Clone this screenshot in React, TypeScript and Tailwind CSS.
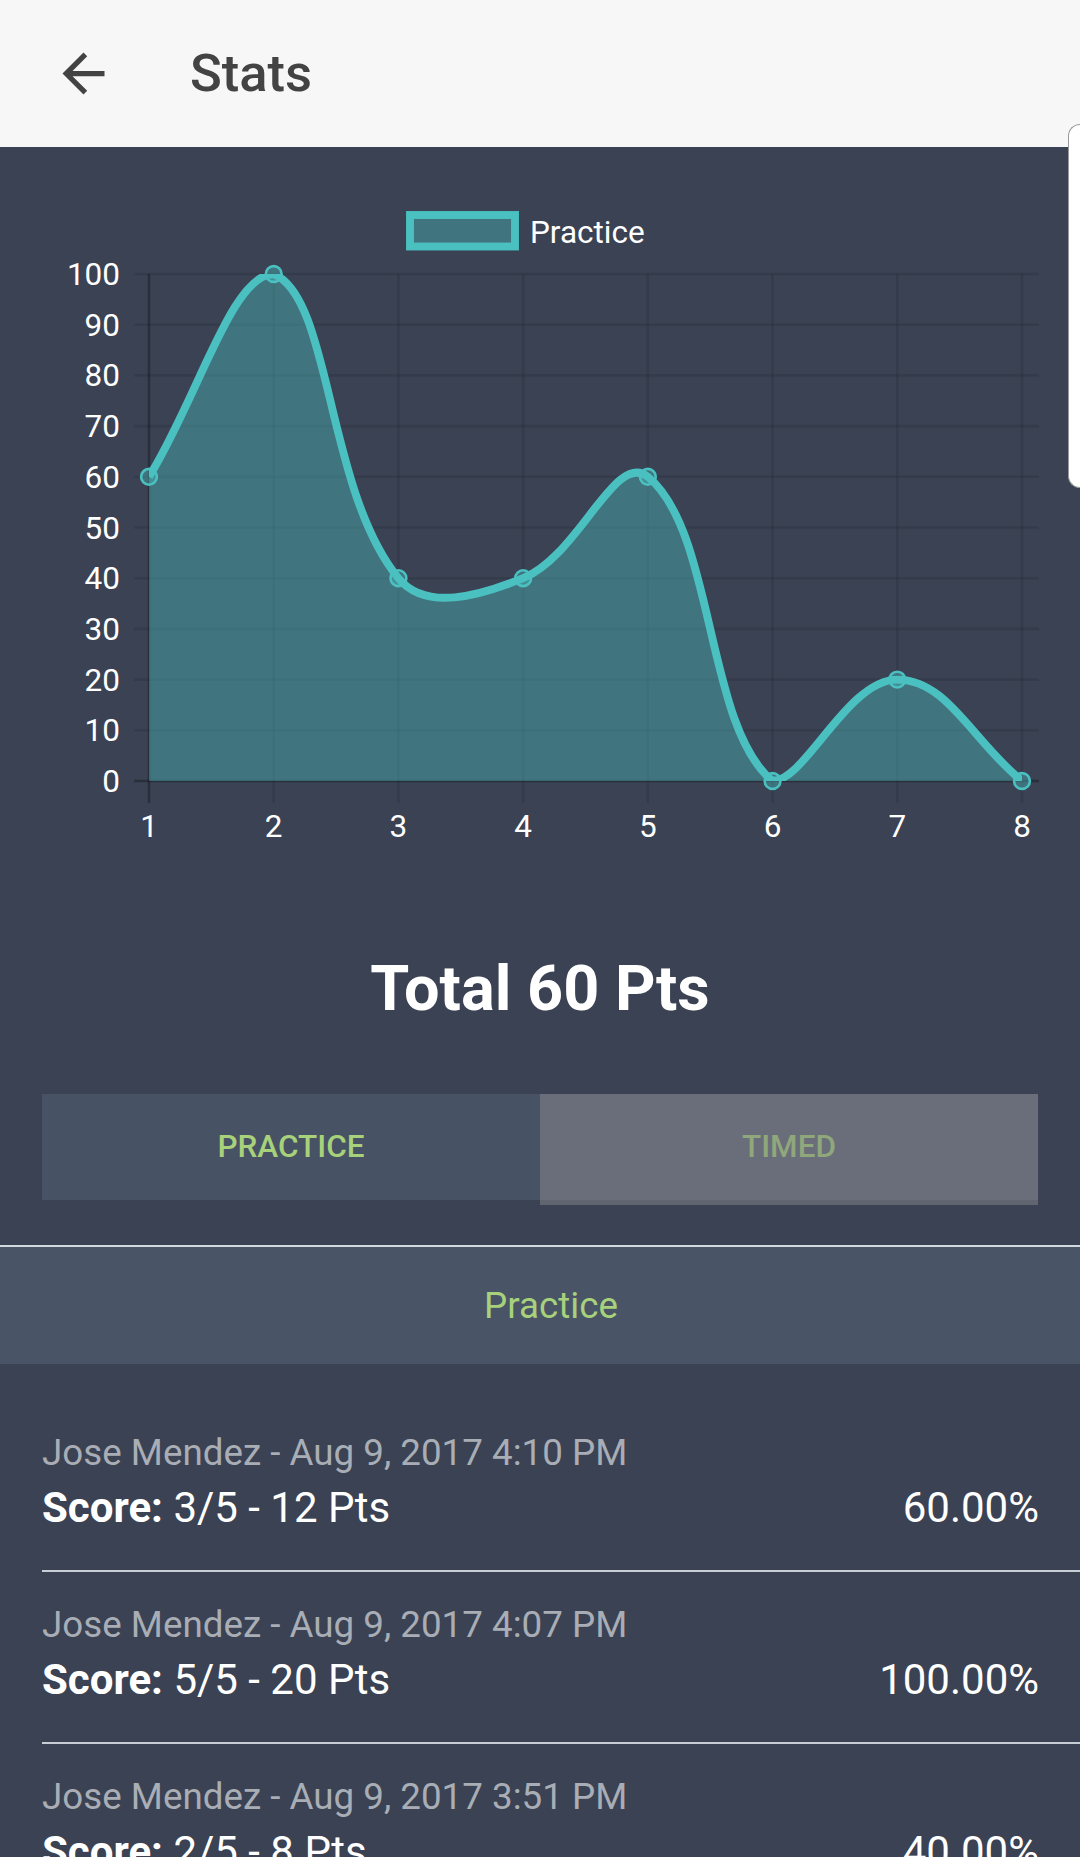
import React from "react";

const data = [60, 100, 40, 40, 60, 0, 20, 0];
const area = { left: 149, right: 1022, top: 274, bottom: 781 };
const TEAL = "#4bc0c0";
const FILL = "rgba(75,192,192,0.4)";

type Pt = { x: number; y: number };

function buildCurve() {
  const step = (area.right - area.left) / (data.length - 1);
  const pts: Pt[] = data.map((v, i) => ({
    x: area.left + i * step,
    y: area.bottom - (v / 100) * (area.bottom - area.top),
  }));
  const cap = (p: Pt): Pt => ({
    x: Math.min(Math.max(p.x, area.left), area.right),
    y: Math.min(Math.max(p.y, area.top), area.bottom),
  });
  // chart.js v2 style spline with tension 0.4
  const cps = pts.map((cur, i) => {
    const prev = pts[i - 1] ?? cur;
    const next = pts[i + 1] ?? cur;
    const d01 = Math.hypot(cur.x - prev.x, cur.y - prev.y);
    const d12 = Math.hypot(next.x - cur.x, next.y - cur.y);
    const s01 = d01 / (d01 + d12) || 0;
    const s12 = d12 / (d01 + d12) || 0;
    const fa = 0.4 * s01;
    const fb = 0.4 * s12;
    return {
      prev: cap({ x: cur.x - fa * (next.x - prev.x), y: cur.y - fa * (next.y - prev.y) }),
      next: cap({ x: cur.x + fb * (next.x - prev.x), y: cur.y + fb * (next.y - prev.y) }),
    };
  });
  let d = `M${pts[0].x},${pts[0].y}`;
  for (let i = 1; i < pts.length; i++) {
    const a = cps[i - 1].next;
    const b = cps[i].prev;
    d += ` C${a.x},${a.y} ${b.x},${b.y} ${pts[i].x},${pts[i].y}`;
  }
  const fill = `${d} L${pts[pts.length - 1].x},${area.bottom} L${pts[0].x},${area.bottom} Z`;
  return { pts, d, fill, step };
}

function Chart() {
  const { pts, d, fill } = buildCurve();
  const yTicks = Array.from({ length: 11 }, (_, k) => k * 10);
  const yOf = (v: number) => area.bottom - (v / 100) * (area.bottom - area.top);
  return (
    <svg width={1080} height={713} viewBox="0 147 1080 713" className="block" fontFamily="Roboto, sans-serif">
      <defs>
        <clipPath id="plot">
          <rect x={area.left} y={area.top} width={area.right - area.left} height={area.bottom - area.top} />
        </clipPath>
      </defs>

      {/* legend */}
      <rect x={410} y={215} width={105} height={31.5} fill={FILL} stroke={TEAL} strokeWidth={7.9} />
      <text x={530} y={243} fontSize={31.5} fill="#ffffff">Practice</text>

      {/* grid */}
      {yTicks.map((v) => (
        <line
          key={"h" + v}
          x1={134}
          x2={1039}
          y1={yOf(v)}
          y2={yOf(v)}
          stroke={v === 0 ? "rgba(0,0,0,0.28)" : "rgba(0,0,0,0.09)"}
          strokeWidth={2.6}
        />
      ))}
      {pts.map((p, i) => (
        <line
          key={"v" + i}
          x1={p.x}
          x2={p.x}
          y1={area.top}
          y2={803}
          stroke={i === 0 ? "rgba(0,0,0,0.28)" : "rgba(0,0,0,0.09)"}
          strokeWidth={2.6}
        />
      ))}

      {/* y labels */}
      {yTicks.map((v) => (
        <text key={"yl" + v} x={120} y={yOf(v) + 11} fontSize={31.5} fill="#ffffff" textAnchor="end">
          {v}
        </text>
      ))}
      {/* x labels */}
      {pts.map((p, i) => (
        <text key={"xl" + i} x={p.x} y={837} fontSize={31.5} fill="#ffffff" textAnchor="middle">
          {i + 1}
        </text>
      ))}

      {/* dataset */}
      <g clipPath="url(#plot)">
        <path d={fill} fill={FILL} />
        <path d={d} fill="none" stroke={TEAL} strokeWidth={7.9} strokeLinejoin="round" />
      </g>
      {pts.map((p, i) => (
        <circle key={"p" + i} cx={p.x} cy={p.y} r={7.9} fill={FILL} stroke={TEAL} strokeWidth={2.6} />
      ))}
    </svg>
  );
}

const results = [
  { when: "Aug 9, 2017 4:10 PM", score: "3/5 - 12 Pts", pct: "60.00%" },
  { when: "Aug 9, 2017 4:07 PM", score: "5/5 - 20 Pts", pct: "100.00%" },
  { when: "Aug 9, 2017 3:51 PM", score: "2/5 - 8 Pts", pct: "40.00%" },
];

export default function App() {
  return (
    <div className="relative w-[1080px] h-[1857px] overflow-hidden bg-[#3a4253] font-['Roboto',sans-serif]">
      {/* toolbar */}
      <header className="h-[147px] bg-[#f7f7f7] flex items-center">
        <div className="w-[190px] pl-[52px] flex items-center">
          <svg width="63" height="63" viewBox="0 0 24 24" fill="#434343">
            <path d="M20 11H7.83l5.59-5.59L12 4l-8 8 8 8 1.41-1.41L7.83 13H20v-2z" />
          </svg>
        </div>
        <h1 className="text-[52.5px] font-medium text-[#434343] leading-none">Stats</h1>
      </header>

      <Chart />

      <div className="pt-[92px] pb-[68px] text-center">
        <div className="text-[63px] leading-[74px] font-bold text-white">Total 60 Pts</div>
      </div>

      {/* mode tabs */}
      <div className="px-[42px] flex items-start">
        <div className="flex-1 h-[106px] bg-[#475264] flex items-center justify-center text-[31.5px] font-medium text-[#a7d17a]">
          PRACTICE
        </div>
        <div className="flex-1 h-[111px] bg-[#6a6e7a] border-b-[5px] border-[#61656f] flex items-center justify-center text-[31.5px] font-medium text-[#8fa77b]">
          TIMED
        </div>
      </div>

      <div className="mt-[40px] h-[2px] bg-[#d3d7de]" />
      <div className="h-[117px] bg-[#4a5467] flex items-center justify-center pl-[22px] text-[36.75px] text-[#a7d17a]">
        Practice
      </div>

      {/* results */}
      <ul className="pt-[36px]">
        {results.map((r) => (
          <li key={r.when} className="ml-[42px] pr-[41px] pt-[31px] pb-[38px] border-b-2 border-[#c9ced6]">
            <div className="h-[44px] flex items-center text-[36.75px] text-[#a9adb5]">Jose Mendez - {r.when}</div>
            <div className="mt-[7px] h-[50px] flex items-center justify-between text-[42px] text-white">
              <span>
                <span className="font-bold">Score:</span> {r.score}
              </span>
              <span>{r.pct}</span>
            </div>
          </li>
        ))}
      </ul>

      {/* edge panel handle */}
      <div className="absolute right-0 top-[124px] w-[12px] h-[364px] bg-white border border-r-0 border-[#9a9a9a] rounded-l-[14px]" />
    </div>
  );
}
